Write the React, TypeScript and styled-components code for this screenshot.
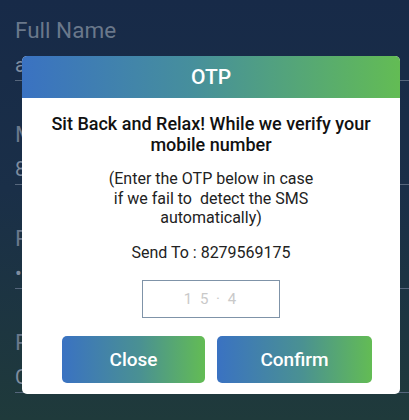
import React from "react";
import styled, { createGlobalStyle } from "styled-components";

const GlobalStyle = createGlobalStyle`
  html, body {
    margin: 0;
    padding: 0;
  }
  body {
    font-family: Roboto, "Noto Sans", "Liberation Sans", sans-serif;
    background: #1c3040;
  }
`;

const Screen = styled.div`
  position: relative;
  width: 409px;
  height: 420px;
  overflow: hidden;
  background: linear-gradient(180deg, #172a48 0%, #1a2f48 45%, #1f3a3b 100%);
`;

const Form = styled.div`
  display: flex;
  flex-direction: column;
  padding: 16.5px 0 0 15px;
`;

const Field = styled.div`
  display: flex;
  flex-direction: column;
  height: 104px;
  box-sizing: border-box;
`;

const Label = styled.div`
  font-size: 22.5px;
  line-height: 26px;
  color: #6a788b;
`;

const Value = styled.div`
  margin-top: 9.5px;
  font-size: 20px;
  line-height: 26px;
  color: #7f8da0;
  padding-bottom: 2px;
  border-bottom: 1px solid #56667c;
`;

const Modal = styled.div`
  position: absolute;
  top: 56px;
  left: 22px;
  width: 378px;
  background: #ffffff;
  border-radius: 5px;
  overflow: hidden;
  display: flex;
  flex-direction: column;
  align-items: center;
  padding-bottom: 11px;
`;

const Header = styled.div`
  align-self: stretch;
  height: 42px;
  display: flex;
  align-items: center;
  justify-content: center;
  background: linear-gradient(90deg, #3a72c2 0%, #468f9c 45%, #63bc54 100%);
  color: #ffffff;
  font-size: 21px;
  font-weight: 500;
`;

const Title = styled.div`
  margin-top: 15px;
  font-size: 18px;
  font-weight: 500;
  line-height: 21px;
  color: #111111;
  text-align: center;
  padding: 0 20px;
`;

const Note = styled.div`
  margin-top: 14px;
  font-size: 16px;
  line-height: 19.5px;
  color: #222222;
  text-align: center;
  white-space: pre-wrap;
`;

const SendTo = styled.div`
  margin-top: 14px;
  font-size: 16px;
  line-height: 22px;
  color: #222222;
`;

const OtpBox = styled.div`
  margin-top: 16px;
  width: 138px;
  height: 38px;
  box-sizing: border-box;
  border: 1px solid #7f93a8;
  display: flex;
  align-items: center;
  justify-content: center;
  font-size: 15px;
  color: #c9c9c9;
  letter-spacing: 2px;
`;

const Actions = styled.div`
  align-self: stretch;
  display: flex;
  gap: 12px;
  margin-top: 18px;
  padding: 0 28px 0 40px;
`;

const ActionButton = styled.button<{ $w: number }>`
  width: ${(p) => p.$w}px;
  height: 47px;
  border: none;
  border-radius: 5px;
  background: linear-gradient(90deg, #3a72c2 0%, #4a9192 55%, #63bc54 100%);
  color: #ffffff;
  font-family: inherit;
  font-size: 19px;
  font-weight: 500;
  cursor: pointer;
`;

const fields = [
  { label: "Full Name", value: "a" },
  { label: "Mobile", value: "8" },
  { label: "Password", value: "•" },
  { label: "Promo", value: "C" },
];

export default function App() {
  return (
    <>
      <GlobalStyle />
      <Screen>
        <Form>
          {fields.map((f) => (
            <Field key={f.label}>
              <Label>{f.label}</Label>
              <Value>{f.value}</Value>
            </Field>
          ))}
        </Form>
        <Modal>
          <Header>OTP</Header>
          <Title>Sit Back and Relax! While we verify your mobile number</Title>
          <Note>
            {"(Enter the OTP below in case\nif we fail to  detect the SMS\nautomatically)"}
          </Note>
          <SendTo>Send To : 8279569175</SendTo>
          <OtpBox>1 5 · 4</OtpBox>
          <Actions>
            <ActionButton $w={143}>Close</ActionButton>
            <ActionButton $w={155}>Confirm</ActionButton>
          </Actions>
        </Modal>
      </Screen>
    </>
  );
}
